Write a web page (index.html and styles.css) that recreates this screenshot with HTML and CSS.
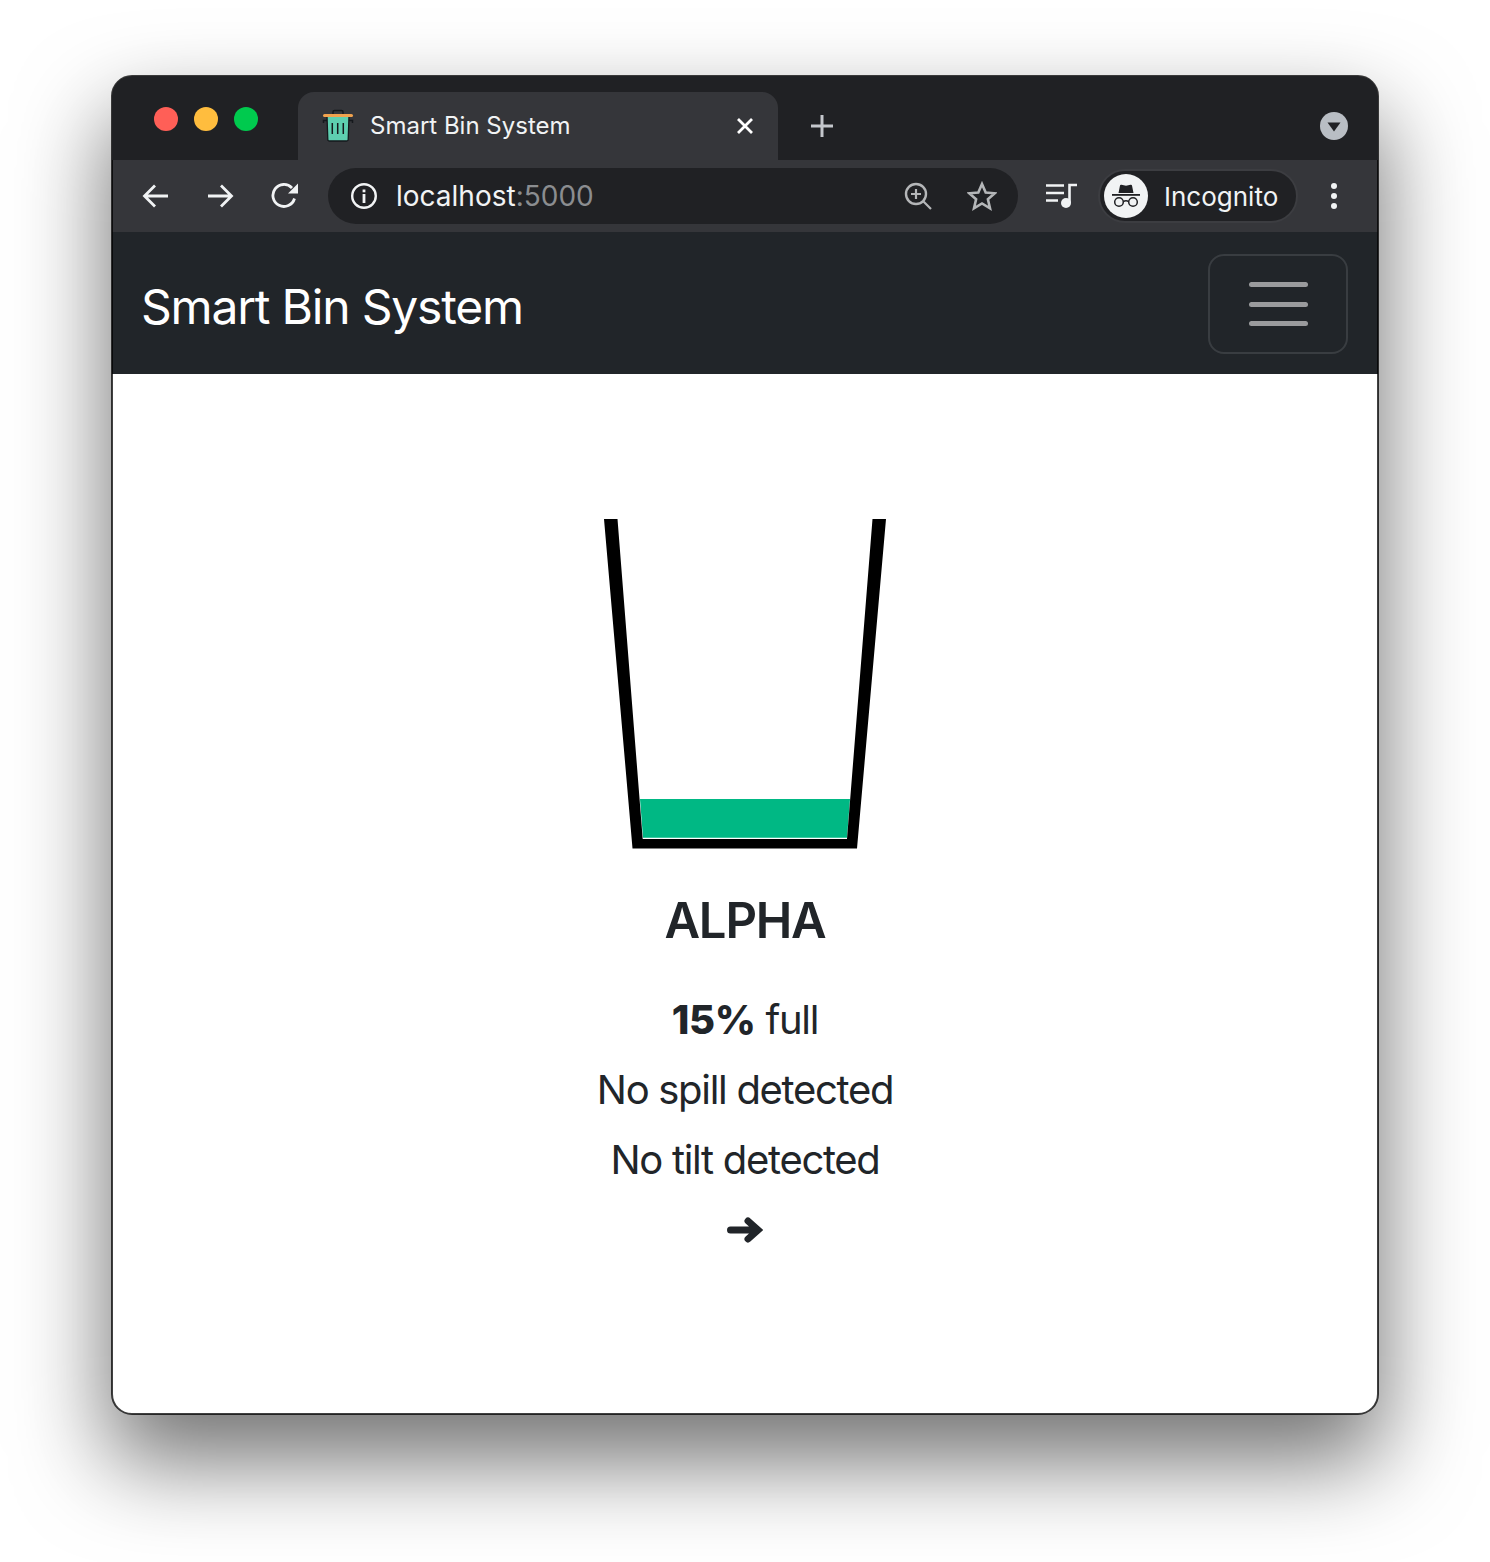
FILE: index.html
```html
<!DOCTYPE html>
<html lang="en">
<head>
  <meta charset="UTF-8">
  <meta name="viewport" content="width=device-width, initial-scale=1.0">
  <title>Smart Bin System</title>
  <link rel="stylesheet" href="styles.css">
</head>
<body>
  <div class="window">
    <!-- Tab strip -->
    <div class="tabstrip">
      <div class="lights">
        <span class="light light-red"></span>
        <span class="light light-yellow"></span>
        <span class="light light-green"></span>
      </div>
      <div class="tab">
        <svg class="favicon" viewBox="0 0 32 34">
          <path d="M11 5V3Q11 1.500 12.500 1.500H19.500Q21 1.500 21 3V5" fill="none" stroke="#15181c" stroke-width="1.500"/>
          <path d="M5 11.500H1.500V14M27 11.500H30.500V14" fill="none" stroke="#15181c" stroke-width="1.500"/>
          <path d="M5 7H27L26.200 30.500Q26.200 32 24.500 32H7.500Q5.800 32 5.800 30.500Z" fill="#5ecfb0" stroke="#15181c" stroke-width="1.300"/>
          <rect x="1" y="5" width="30" height="3" rx="1.500" fill="#f0a24e"/>
          <path d="M10.300 14V25M15.700 14V25M21.300 14V25" stroke="#15181c" stroke-width="1.500"/>
        </svg>
        <span class="tab-title">Smart Bin System</span>
        <svg class="tab-close" viewBox="0 0 18 18"><path d="M2 2L16 16M16 2L2 16" stroke="#fff" stroke-width="2.800"/></svg>
      </div>
      <svg class="new-tab" viewBox="0 0 24 24"><path d="M12 1V23M1 12H23" stroke="#c4c7cc" stroke-width="3"/></svg>
      <div class="spacer"></div>
      <svg class="tab-search" viewBox="0 0 28 28">
        <circle cx="14" cy="14" r="14" fill="#b9bec4"/>
        <path d="M7.500 10.500H20.500L14 19.500Z" fill="#202124"/>
      </svg>
    </div>

    <!-- Toolbar -->
    <div class="toolbar">
      <svg class="nav-icon" viewBox="0 0 28 28"><path d="M26 14H3M13 3.500L2.500 14L13 24.500" fill="none" stroke="#f1f3f4" stroke-width="2.800"/></svg>
      <svg class="nav-icon nav-forward" viewBox="0 0 28 28"><path d="M2 14H25M15 3.500L25.500 14L15 24.500" fill="none" stroke="#f1f3f4" stroke-width="2.800"/></svg>
      <svg class="nav-icon nav-reload" viewBox="0 0 28 28">
        <path d="M23.500 16.500A11 11 0 1 1 21 6" fill="none" stroke="#f1f3f4" stroke-width="2.800"/>
        <path d="M27 1.500V11.500H17Z" fill="#f1f3f4"/>
      </svg>
      <div class="omnibox">
        <svg class="info-icon" viewBox="0 0 28 28">
          <circle cx="14" cy="14" r="11.800" fill="none" stroke="#f1f3f4" stroke-width="2.400"/>
          <rect x="12.600" y="12" width="2.800" height="9" fill="#f1f3f4"/>
          <rect x="12.600" y="7.500" width="2.800" height="2.800" fill="#f1f3f4"/>
        </svg>
        <span class="url">localhost<span class="url-port">:5000</span></span>
        <div class="spacer"></div>
        <svg class="zoom-icon" viewBox="0 0 28 28">
          <circle cx="12" cy="12" r="10" fill="none" stroke="#b4b6b8" stroke-width="2.400"/>
          <path d="M19.500 19.500L27 27M12 7V17M7 12H17" fill="none" stroke="#b4b6b8" stroke-width="2.200"/>
        </svg>
        <svg class="star-icon" viewBox="0 0 30 30">
          <path d="M15 3L18.700 11.500L27.800 12.300L20.900 18.300L23 27.300L15 22.500L7 27.300L9.100 18.300L2.200 12.300L11.300 11.500Z" fill="none" stroke="#b4b6b8" stroke-width="2.600"/>
        </svg>
      </div>
      <svg class="media-icon" viewBox="0 0 32 26">
        <path d="M0 2.500H18M0 10H18M0 17.500H12" stroke="#f1f3f4" stroke-width="2.600"/>
        <path d="M23.500 20V2H31" fill="none" stroke="#f1f3f4" stroke-width="2.600"/>
        <circle cx="20" cy="20" r="5" fill="#f1f3f4"/>
      </svg>
      <div class="profile">
        <span class="avatar">
          <svg class="avatar-icon" viewBox="0 0 28 24">
            <path d="M6.500 9L8 1.500Q8.300 0.500 9.500 0.800L14 1.800L18.500 0.800Q19.700 0.500 20 1.500L21.500 9Z" fill="#202124"/>
            <rect x="0" y="10" width="28" height="1.800" fill="#202124"/>
            <circle cx="7" cy="18" r="4.300" fill="none" stroke="#202124" stroke-width="1.500"/>
            <circle cx="21" cy="18" r="4.300" fill="none" stroke="#202124" stroke-width="1.500"/>
            <path d="M11.300 17.500Q14 16 16.700 17.500" fill="none" stroke="#202124" stroke-width="1.500"/>
          </svg>
        </span>
        <span class="profile-name">Incognito</span>
      </div>
      <svg class="menu-icon" viewBox="0 0 8 28">
        <circle cx="4" cy="4" r="3" fill="#f1f3f4"/>
        <circle cx="4" cy="14" r="3" fill="#f1f3f4"/>
        <circle cx="4" cy="24" r="3" fill="#f1f3f4"/>
      </svg>
    </div>

    <!-- Page -->
    <nav class="navbar">
      <a class="navbar-brand">Smart Bin System</a>
      <button class="navbar-toggler">
        <span class="toggler-bar"></span>
        <span class="toggler-bar"></span>
        <span class="toggler-bar"></span>
      </button>
    </nav>

    <main class="content">
      <svg class="bin" viewBox="0 0 282 330">
        <polygon points="36,280 246,280 243,318.700 39,318.700" fill="#00b884"/>
        <polygon points="0,0 28.500,329.500 253,329.500 282,0 268.500,0 243,320 38.700,320 13.500,0" fill="#000"/>
      </svg>
      <h2 class="bin-name">ALPHA</h2>
      <p class="stat"><strong>15%</strong> full</p>
      <p class="stat">No spill detected</p>
      <p class="stat">No tilt detected</p>
      <svg class="arrow" viewBox="0 0 36 28">
        <path d="M3.500 14H30M21 5L31 14L21 23" fill="none" stroke="#212529" stroke-width="7" stroke-linecap="round"/>
      </svg>
    </main>
  </div>
</body>
</html>
```

FILE: styles.css
```css
/* Browser window on a white backdrop */
body {
  margin: 0;
  background-color: #ffffff;
  font-family: Inter, "Liberation Sans", sans-serif;
}
.window {
  width: 1266px;
  height: 1338px;
  margin: 76px 112px 148px;
  border-radius: 20px;
  overflow: hidden;
  box-sizing: border-box;
  background-color: #ffffff;
  outline: 2px solid rgba(0, 0, 0, 0.75);
  outline-offset: -1px;
  box-shadow: 0 44px 90px 4px rgba(0, 0, 0, 0.55);
}
.spacer {
  flex: 1;
}

/* Tab strip */
.tabstrip {
  height: 84px;
  display: flex;
  align-items: flex-end;
  background-color: #202124;
  position: relative;
}
.lights {
  width: 186px;
  padding-left: 42px;
  box-sizing: border-box;
  height: 84px;
  display: flex;
  gap: 16px;
  padding-top: 31px;
}
.light {
  width: 24px;
  height: 24px;
  border-radius: 50%;
}
.light-red { background-color: #ff5f57; }
.light-yellow { background-color: #ffbd3e; }
.light-green { background-color: #00ca4e; }
.tab {
  width: 480px;
  height: 68px;
  box-sizing: border-box;
  padding: 0 24px;
  display: flex;
  align-items: center;
  background-color: #35363a;
  border-radius: 16px 16px 0 0;
}
.favicon {
  width: 32px;
  height: 34px;
  margin-right: 16px;
}
.tab-title {
  flex: 1;
  color: #f1f3f4;
  font-size: 24px;
  margin-bottom: 2px;
}
.tab-close {
  width: 18px;
  height: 18px;
}
.new-tab {
  width: 24px;
  height: 24px;
  margin: 0 0 22px 32px;
}
.tab-search {
  width: 28px;
  height: 28px;
  margin: 0 30px 20px 0;
}

/* Toolbar */
.toolbar {
  height: 72px;
  display: flex;
  align-items: center;
  padding-left: 30px;
  background-color: #35363a;
}
.nav-icon {
  width: 28px;
  height: 28px;
  margin-right: 36px;
}
.nav-forward {
  margin-right: 37px;
}
.nav-reload {
  margin-right: 29px;
}
.omnibox {
  width: 690px;
  height: 56px;
  box-sizing: border-box;
  padding: 0 21px 0 22px;
  display: flex;
  align-items: center;
  background-color: #202124;
  border-radius: 28px;
}
.info-icon {
  width: 28px;
  height: 28px;
  margin-right: 18px;
}
.url {
  color: #f1f3f4;
  font-size: 28px;
}
.url-port {
  color: #8b8d90;
}
.zoom-icon {
  width: 28px;
  height: 28px;
  margin-right: 35px;
}
.star-icon {
  width: 30px;
  height: 30px;
}
.media-icon {
  width: 32px;
  height: 26px;
  margin: 0 20px 0 28px;
}
.profile {
  width: 200px;
  height: 54px;
  box-sizing: border-box;
  padding-left: 4px;
  display: flex;
  align-items: center;
  gap: 16px;
  background-color: #202124;
  border: 2px solid #3c3d41;
  border-radius: 27px;
}
.avatar {
  width: 44px;
  height: 44px;
  display: flex;
  align-items: center;
  justify-content: center;
  background-color: #f1f3f4;
  border-radius: 50%;
}
.avatar-icon {
  width: 28px;
  height: 24px;
}
.profile-name {
  color: #f1f3f4;
  font-size: 26px;
}
.menu-icon {
  width: 8px;
  height: 28px;
  margin-left: 32px;
}

/* Navbar */
.navbar {
  height: 142px;
  box-sizing: border-box;
  padding: 2px 30px 0 29px;
  display: flex;
  align-items: center;
  justify-content: space-between;
  background-color: #212529;
}
.navbar-brand {
  color: #ffffff;
  font-size: 48px;
  letter-spacing: -1.2px;
  margin-top: 4px;
}
.navbar-toggler {
  width: 140px;
  height: 100px;
  padding: 0;
  display: flex;
  flex-direction: column;
  align-items: center;
  justify-content: center;
  gap: 14.5px;
  background: none;
  border: 2px solid #393d41;
  border-radius: 16px;
}
.toggler-bar {
  width: 59px;
  height: 5px;
  border-radius: 3px;
  background-color: #9a9b9d;
}

/* Bin card */
.content {
  display: flex;
  flex-direction: column;
  align-items: center;
  padding-top: 145px;
  color: #212529;
}
.bin {
  width: 282px;
  height: 330px;
}
.bin-name {
  margin: 42px 0 45px;
  font-size: 49px;
  line-height: 60px;
  font-weight: 600;
  letter-spacing: -1.2px;
}
.stat {
  margin: 0 0 22px;
  font-size: 40px;
  line-height: 48px;
  letter-spacing: -1.3px;
}
.stat strong {
  font-weight: 800;
  letter-spacing: -0.4px;
}
.arrow {
  width: 36px;
  height: 28px;
  margin-top: 10px;
}
```
